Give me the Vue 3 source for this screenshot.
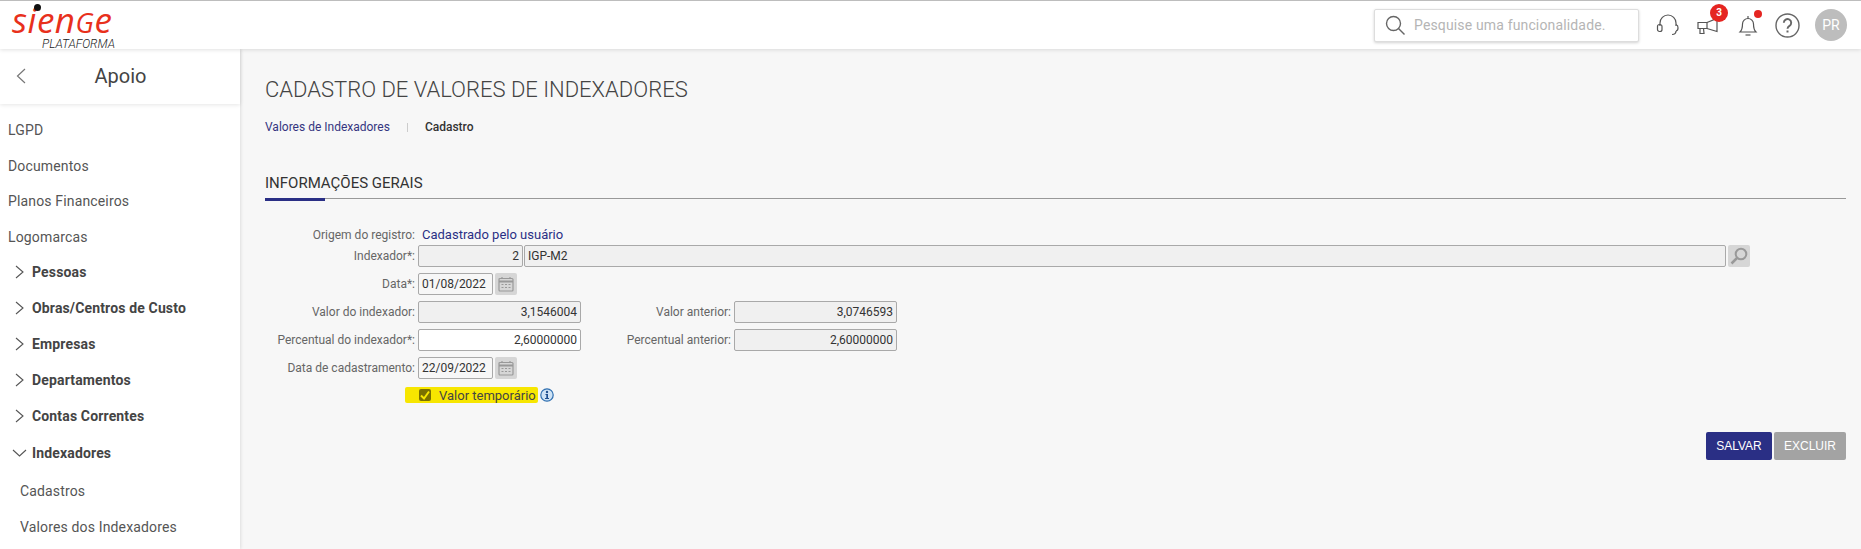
<script setup>
const plain = ['LGPD', 'Documentos', 'Planos Financeiros', 'Logomarcas']
const groups = ['Pessoas', 'Obras/Centros de Custo', 'Empresas', 'Departamentos', 'Contas Correntes']
const children = ['Cadastros', 'Valores dos Indexadores']
</script>

<template>
  <div class="app">
    <header class="topbar">
      <div class="logo">
        <span class="logo-word">sien<span class="logo-g">G</span>e</span>
        <span class="logo-dot"></span>
        <span class="logo-sub">PLATAFORMA</span>
      </div>
      <div class="tools">
        <div class="search">
          <svg width="22" height="22" viewBox="0 0 22 22" fill="none" stroke="#666" stroke-width="1.4"><circle cx="9.5" cy="9.5" r="7"/><path d="M14.5 14.5l6 6"/></svg>
          <span class="placeholder">Pesquise uma funcionalidade.</span>
        </div>
        <svg class="ic headset" width="24" height="24" viewBox="0 0 24 24" fill="none" stroke="#555" stroke-width="1.2"><path d="M4 13V10a8 8 0 0 1 16 0v3"/><rect x="1.5" y="11.5" width="4.5" height="7" rx="2"/><path d="M20 11.5a3.2 3.2 0 0 1 2 3.2 3.2 3.2 0 0 1-2 3.3"/><path d="M20 18c0 2.500-2 3.500-4 3.500"/></svg>
        <div class="mega">
          <svg width="24" height="24" viewBox="0 0 24 24" fill="none" stroke="#555" stroke-width="1.2"><path d="M2 9.500h9v6H2z"/><path d="M11 9.500l10-4v13l-10-3"/><path d="M4 15.500v5h4l-.5-5"/></svg>
          <span class="badge">3</span>
        </div>
        <div class="bell">
          <svg width="24" height="24" viewBox="0 0 24 24" fill="none" stroke="#555" stroke-width="1.2"><path d="M4 19c2-2 2.500-4 2.500-8a5.500 5.500 0 0 1 11 0c0 4 .5 6 2.500 8z"/><path d="M12 3v2.500"/><path d="M9.500 22h5"/></svg>
          <span class="dot"></span>
        </div>
        <svg class="ic help" width="25" height="25" viewBox="0 0 25 25" fill="none" stroke="#666" stroke-width="1.400"><circle cx="12.500" cy="12.500" r="11.500"/><path d="M8.800 9.800a3.700 3.700 0 1 1 5.700 3.100c-1.300.8-2 1.400-2 2.900" stroke-width="1.900"/><path d="M12.500 17.500v2" stroke-width="2"/></svg>
        <div class="avatar">PR</div>
      </div>
    </header>

    <div class="content">
      <aside class="sidebar">
        <div class="side-head">
          <svg class="back" width="12" height="18" viewBox="0 0 12 18" fill="none" stroke="#777" stroke-width="1.200"><path d="M10 2L2.500 9 10 16"/></svg>
          <span class="side-title">Apoio</span>
        </div>
        <nav class="nav">
          <a v-for="p in plain" :key="p" class="plain">{{ p }}</a>
          <a v-for="g in groups" :key="g" class="group">
            <svg width="10" height="14" viewBox="0 0 10 14" fill="none" stroke="#555" stroke-width="1.100"><path d="M1 1l7 6-7 6"/></svg>
            <span>{{ g }}</span>
          </a>
          <a class="group open">
            <svg width="15" height="10" viewBox="0 0 15 10" fill="none" stroke="#555" stroke-width="1.100"><path d="M1 2l6.500 6L14 2"/></svg>
            <span>Indexadores</span>
          </a>
          <a v-for="c in children" :key="c" class="child">{{ c }}</a>
        </nav>
      </aside>

      <main class="main">
        <h1 class="title">CADASTRO DE VALORES DE INDEXADORES</h1>
        <div class="crumbs">
          <span class="crumb-link">Valores de Indexadores</span>
          <span class="crumb-sep"></span>
          <span class="crumb-now">Cadastro</span>
        </div>
        <div class="section">
          <h2 class="section-title">INFORMAÇÕES GERAIS</h2>
          <div class="section-bar"></div>
        </div>

        <form class="form">
          <div class="row origin">
            <label class="lab">Origem do registro:</label>
            <span class="origin-val">Cadastrado pelo usuário</span>
          </div>
          <div class="row">
            <label class="lab">Indexador*:</label>
            <div class="fld ro num code">2</div>
            <div class="fld ro name">IGP-M2</div>
            <button type="button" class="sq">
              <svg width="18" height="18" viewBox="0 0 18 18" fill="none" stroke="#999" stroke-width="2"><circle cx="11" cy="7" r="5.300"/><path d="M7 11l-5.500 5.500" stroke-width="2.500"/></svg>
            </button>
          </div>
          <div class="row">
            <label class="lab">Data*:</label>
            <div class="fld date">01/08/2022</div>
            <button type="button" class="sq">
              <svg width="16" height="16" viewBox="0 0 16 16" fill="none" stroke="#999" stroke-width="1.200"><rect x="1" y="2.500" width="14" height="12.500" rx="1"/><path d="M1 5.500h14" stroke-width="2"/><path d="M4 1v2M12 1v2"/><path d="M3.500 8.500h2M7 8.500h2M10.500 8.500h2M3.500 11.500h2M7 11.500h2M10.500 11.500h2"/></svg>
            </button>
          </div>
          <div class="row">
            <label class="lab">Valor do indexador:</label>
            <div class="fld ro num val">3,1546004</div>
            <label class="lab lab2">Valor anterior:</label>
            <div class="fld ro num val">3,0746593</div>
          </div>
          <div class="row">
            <label class="lab">Percentual do indexador*:</label>
            <div class="fld white num val">2,60000000</div>
            <label class="lab lab2">Percentual anterior:</label>
            <div class="fld ro num val">2,60000000</div>
          </div>
          <div class="row">
            <label class="lab">Data de cadastramento:</label>
            <div class="fld date">22/09/2022</div>
            <button type="button" class="sq">
              <svg width="16" height="16" viewBox="0 0 16 16" fill="none" stroke="#999" stroke-width="1.200"><rect x="1" y="2.500" width="14" height="12.500" rx="1"/><path d="M1 5.500h14" stroke-width="2"/><path d="M4 1v2M12 1v2"/><path d="M3.500 8.500h2M7 8.500h2M10.500 8.500h2M3.500 11.500h2M7 11.500h2M10.500 11.500h2"/></svg>
            </button>
          </div>
          <div class="check-row">
            <span class="mark">
              <span class="box">
                <svg width="12" height="12" viewBox="0 0 12 12" fill="none" stroke="#f7e600" stroke-width="2"><path d="M2 6.500l3 3 5-7"/></svg>
              </span>
              <span class="check-text">Valor temporário</span>
            </span>
            <svg class="info" width="14" height="14" viewBox="0 0 14 14"><circle cx="7" cy="7" r="6.200" fill="#cfe3f5" stroke="#2f6fb0" stroke-width="1.200"/><circle cx="7" cy="4" r="1.200" fill="#1f4f8f"/><path d="M5.500 6h2.500v4h1v1H5v-1h1.300V7H5.500z" fill="#1f4f8f"/></svg>
          </div>
        </form>

        <div class="actions">
          <button type="button" class="btn save">SALVAR</button>
          <button type="button" class="btn del">EXCLUIR</button>
        </div>
      </main>
    </div>
  </div>
</template>

<style scoped>
.app {
  width: 1861px;
  height: 549px;
  overflow: hidden;
  background: #f7f7f7;
  font-family: Roboto, "Liberation Sans", sans-serif;
  color: #444;
  display: flex;
  flex-direction: column;
}
.topbar {
  height: 49px;
  flex: none;
  box-sizing: border-box;
  border-top: 1px solid #bdbdbd;
  background: #fff;
  box-shadow: 0 1px 4px rgba(0, 0, 0, .12);
  display: flex;
  justify-content: space-between;
  position: relative;
  z-index: 3;
}
.logo {
  position: relative;
  margin-left: 12px;
  width: 120px;
  display: flex;
  flex-direction: column;
}
.logo-word {
  display: block;
  font-family: "Open Sans", sans-serif;
  font-style: italic;
  font-weight: 400;
  font-size: 35px;
  line-height: 26px;
  letter-spacing: .5px;
  color: #e8301c;
  white-space: nowrap;
  margin-top: 6px;
}
.logo-g { font-size: 27px; }
.logo-dot {
  position: absolute;
  left: 22px;
  top: 3px;
  width: 7px;
  height: 7px;
  border-radius: 50%;
  background: #111;
}
.logo-sub {
  display: block;
  margin: 2px 0 0 30px;
  font-size: 12px;
  line-height: 13px;
  font-style: italic;
  font-weight: 300;
  color: #222;
  white-space: nowrap;
}
.tools {
  display: flex;
  align-items: center;
  padding-right: 14px;
}
.search {
  width: 265px;
  height: 33px;
  box-sizing: border-box;
  margin-right: 17px;
  padding-left: 9px;
  background: #fff;
  border: 1px solid #ddd;
  border-radius: 2px;
  box-shadow: 0 1px 3px rgba(0, 0, 0, .18);
  display: flex;
  align-items: center;
  gap: 8px;
}
.placeholder {
  font-size: 14px;
  color: #b5b5b5;
  letter-spacing: .15px;
  white-space: nowrap;
}
.ic { flex: none; }
.mega, .bell { position: relative; height: 24px; width: 24px; }
.mega { margin-left: 16px; }
.bell { margin-left: 16px; }
.help { margin-left: 15px; }
.avatar { margin-left: 15px; }
.badge {
  position: absolute;
  left: 14px;
  top: -9px;
  width: 18px;
  height: 18px;
  border-radius: 50%;
  background: #e52521;
  color: #fff;
  font-size: 10px;
  font-weight: 700;
  line-height: 18px;
  text-align: center;
}
.dot {
  position: absolute;
  left: 18px;
  top: -3px;
  width: 8px;
  height: 8px;
  border-radius: 50%;
  background: #e52521;
}
.avatar {
  width: 32px;
  height: 32px;
  border-radius: 50%;
  background: #bdbdbd;
  color: #fff;
  font-size: 14px;
  line-height: 32px;
  text-align: center;
}
.content {
  flex: 1;
  display: flex;
  min-height: 0;
}
.sidebar {
  width: 240px;
  flex: none;
  background: #fff;
  box-shadow: 1px 0 3px rgba(0, 0, 0, .1);
  position: relative;
  z-index: 2;
}
.side-head {
  height: 55px;
  position: relative;
  display: flex;
  align-items: center;
  justify-content: center;
  box-shadow: 0 1px 4px rgba(0, 0, 0, .1);
}
.back {
  position: absolute;
  left: 15px;
  top: 18px;
}
.side-title {
  font-size: 20px;
  color: #444;
  margin-top: -1px;
  margin-left: 1px;
}
.nav {
  display: flex;
  flex-direction: column;
  padding-top: 9px;
  font-size: 14px;
  letter-spacing: .15px;
  color: #555;
}
.plain {
  height: 35.5px;
  line-height: 35.5px;
  padding-left: 8px;
}
.plain:nth-child(4) { height: 34px; }
.group {
  height: 36px;
  display: flex;
  align-items: center;
  gap: 7px;
  padding-left: 15px;
  font-weight: 700;
  font-size: 14px;
  color: #444;
}
.group.open {
  height: 38px;
  margin-bottom: 2.5px;
  padding-left: 12px;
  gap: 5px;
}
.child {
  height: 35.5px;
  line-height: 35.5px;
  padding-left: 20px;
}
.main {
  flex: 1;
  padding: 0 15px 0 25px;
  min-width: 0;
}
.title {
  margin: 28px 0 0;
  font-size: 22px;
  line-height: 26px;
  font-weight: 300;
  color: #444;
}
.crumbs {
  margin-top: 16px;
  display: flex;
  align-items: center;
  font-size: 12px;
  line-height: 16px;
}
.crumb-link { color: #35357f; }
.crumb-sep {
  width: 1px;
  height: 9px;
  background: #ccc;
  margin: 0 17px 0 17px;
}
.crumb-now { color: #333; font-weight: 500; }
.section { margin-top: 38px; }
.section-title {
  margin: 0;
  font-size: 15px;
  line-height: 20px;
  font-weight: 400;
  color: #333;
  padding-bottom: 5px;
}
.section-bar {
  height: 1px;
  background: #999;
  position: relative;
}
.section-bar::before {
  content: "";
  position: absolute;
  left: 0;
  top: 0;
  width: 60px;
  height: 3px;
  background: #2a2f85;
}
.form {
  margin-top: 28px;
  font-size: 12px;
}
.row {
  display: flex;
  align-items: center;
  height: 22px;
  margin-bottom: 6px;
}
.row.origin {
  height: 16px;
  margin-bottom: 2px;
}
.lab {
  width: 150px;
  flex: none;
  text-align: right;
  color: #666;
  margin-right: 3px;
  white-space: nowrap;
}
.lab2 {
  width: 150px;
  margin-right: 3px;
}
.origin-val {
  color: #2a2f85;
  font-size: 13px;
  margin-left: 4px;
  margin-top: -1px;
}
.fld {
  box-sizing: border-box;
  height: 22px;
  border: 1px solid #a9a9a9;
  border-radius: 2px;
  line-height: 20px;
  padding: 0 3px;
  color: #333;
  background: #f7f7f7;
}
.ro { background: #f0f0f0; }
.white { background: #fff; }
.num { text-align: right; }
.code { width: 105px; margin-right: 1px; }
.name { width: 1202px; padding-left: 3px; }
.date { width: 75px; padding: 0 2px 0 3px; white-space: nowrap; }
.val { width: 163px; }
.sq {
  width: 22px;
  height: 22px;
  margin-left: 2px;
  padding: 0;
  border: 0;
  border-radius: 2px;
  background: #d6d6d6;
  display: flex;
  align-items: center;
  justify-content: center;
}
.check-row {
  display: flex;
  align-items: center;
  margin-left: 140px;
  height: 16px;
  margin-top: 8px;
}
.mark {
  display: flex;
  align-items: center;
  height: 16px;
  width: 133px;
  box-sizing: border-box;
  padding-left: 14px;
  background: #f7e600;
  border-radius: 2px;
}
.box {
  width: 12px;
  height: 12px;
  border-radius: 2px;
  background: #7a7000;
  display: flex;
  align-items: center;
  justify-content: center;
  margin-right: 8px;
}
.check-text {
  color: #444;
  font-size: 13px;
  white-space: nowrap;
}
.info { margin-left: 2px; }
.actions {
  display: flex;
  justify-content: flex-end;
  gap: 2px;
  margin-top: 29px;
}
.btn {
  height: 28px;
  border: 0;
  border-radius: 2px;
  color: #fff;
  font-family: "Liberation Sans", sans-serif;
  font-size: 12px;
  padding: 0;
}
.save { width: 66px; background: #2a2f85; }
.del { width: 72px; background: #a3a3a3; }
</style>
<style>
html, body { margin: 0; overflow: hidden; }
</style>
